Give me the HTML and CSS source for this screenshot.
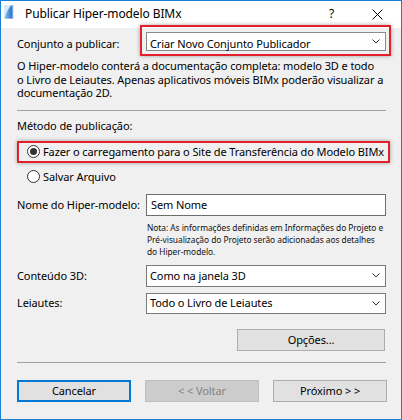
FILE: index.html
```html
<!DOCTYPE html>
<html lang="pt">
<head>
<meta charset="utf-8">
<title>Publicar Hiper-modelo BIMx</title>
<link rel="stylesheet" href="styles.css">
</head>
<body>
<div class="window">
  <div class="titlebar">
    <svg class="appicon" width="10" height="14" viewBox="0 0 10 14">
      <defs>
        <linearGradient id="g" x1="0" y1="0" x2="1" y2="0">
          <stop offset="0" stop-color="#8fc3f0"/>
          <stop offset="1" stop-color="#1e6fd0"/>
        </linearGradient>
      </defs>
      <rect x="0" y="0" width="10" height="14" fill="#d7e8f8"/>
      <path d="M7 0.5 Q3 5 0.5 13.5 L8.5 13.5 L8.5 0.5 Z" fill="url(#g)"/>
    </svg>
    <span class="title">Publicar Hiper-modelo BIMx</span>
    <span class="help">?</span>
    <svg class="close" width="11" height="11" viewBox="0 0 11 11">
      <path d="M0.5 0.5 L10.5 10.5 M10.5 0.5 L0.5 10.5" stroke="#000" stroke-width="1" fill="none"/>
    </svg>
  </div>
  <div class="content">
    <div class="row row-set">
      <span class="lbl">Conjunto a publicar:</span>
      <div class="select select-set">
        <span class="sel-text">Criar Novo Conjunto Publicador</span>
        <svg class="chev" width="8" height="5" viewBox="0 0 8 5"><path d="M0.5 0.5 L4 4 L7.5 0.5" stroke="#333" fill="none"/></svg>
      </div>
    </div>
    <p class="desc">O Hiper-modelo conterá a documentação completa: modelo 3D e todo<br>o Livro de Leiautes. Apenas aplicativos móveis BIMx poderão visualizar a<br>documentação 2D.</p>
    <div class="sep sep1"></div>
    <div class="section">Método de publicação:</div>
    <div class="radio-row radio1"><span class="radio checked"></span><span>Fazer o carregamento para o Site de Transferência do Modelo BIMx</span></div>
    <div class="radio-row radio2"><span class="radio"></span><span>Salvar Arquivo</span></div>
    <div class="row row-name">
      <span class="lbl">Nome do Hiper-modelo:</span>
      <div class="input">Sem Nome</div>
    </div>
    <p class="note">Nota: As informações definidas em Informações do Projeto e<br>Pré-visualização do Projeto serão adicionadas aos detalhes<br>do Hiper-modelo.</p>
    <div class="row row-3d">
      <span class="lbl">Conteúdo 3D:</span>
      <div class="select">
        <span class="sel-text">Como na janela 3D</span>
        <svg class="chev" width="8" height="5" viewBox="0 0 8 5"><path d="M0.5 0.5 L4 4 L7.5 0.5" stroke="#333" fill="none"/></svg>
      </div>
    </div>
    <div class="row row-lay">
      <span class="lbl">Leiautes:</span>
      <div class="select">
        <span class="sel-text">Todo o Livro de Leiautes</span>
        <svg class="chev" width="8" height="5" viewBox="0 0 8 5"><path d="M0.5 0.5 L4 4 L7.5 0.5" stroke="#333" fill="none"/></svg>
      </div>
    </div>
    <div class="options-row"><div class="btn btn-options">Opções...</div></div>
    <div class="sep sep2"></div>
    <div class="buttons">
      <div class="btn btn-default">Cancelar</div>
      <div class="btn btn-disabled">&lt; &lt; Voltar</div>
      <div class="btn">Próximo &gt; &gt;</div>
    </div>
  </div>
  <div class="annot annot1"></div>
  <div class="annot annot2"></div>
</div>
</body>
</html>
```

FILE: styles.css
```css
html, body {
  margin: 0;
  padding: 0;
  background: #f0f0f0;
}

.window {
  position: relative;
  width: 402px;
  height: 420px;
  box-sizing: border-box;
  border: 1px solid #1c7fd6;
  background: #f0f0f0;
  font-family: "Noto Sans", "Open Sans", sans-serif;
  font-size: 11px;
  letter-spacing: -0.1px;
  color: #000;
  overflow: hidden;
}

.titlebar {
  height: 27px;
  background: #fff;
  display: flex;
  align-items: flex-start;
}

.appicon {
  margin: 4px 0 0 3px;
  flex: none;
}

.title {
  margin: 5px 0 0 11px;
  font-size: 12px;
  line-height: 16px;
}

.help {
  margin: 5px 0 0 auto;
  font-size: 12px;
  line-height: 16px;
}

.close {
  margin: 8px 18px 0 38px;
  flex: none;
}

.content {
  padding: 4px 15px 0 16px;
}

.row {
  display: flex;
  align-items: center;
}

.lbl {
  width: 129px;
  flex: none;
  line-height: 14px;
}

.select {
  width: 240px;
  height: 22px;
  box-sizing: border-box;
  border: 1px solid #7a7a7a;
  background: #fff;
  display: flex;
  align-items: center;
  padding: 0 5px 0 3px;
}

.select-set {
  height: 19px;
  border-color: #8a8a8a;
}

.row-set .lbl {
  margin-top: 5px;
}

.select-set .sel-text {
  margin-top: 4px;
}

.sel-text {
  flex: 1;
  line-height: 14px;
  white-space: nowrap;
}

.chev {
  flex: none;
}

.desc {
  margin: 8px 0 0 0;
  line-height: 13.5px;
  white-space: nowrap;
}

.sep {
  height: 1px;
  background: #a0a0a0;
  width: 369px;
}

.sep1 {
  margin-top: 10px;
}

.section {
  margin-top: 8px;
  line-height: 14px;
}

.radio-row {
  display: flex;
  align-items: center;
  height: 16px;
  line-height: 14px;
  white-space: nowrap;
}

.radio1 {
  margin-top: 11px;
  padding-left: 10px;
}

.radio2 {
  margin-top: 9px;
  padding-left: 10px;
}

.radio {
  width: 13px;
  height: 13px;
  box-sizing: border-box;
  border: 1px solid #333;
  border-radius: 50%;
  background: #fff;
  margin-right: 3px;
  flex: none;
  display: flex;
  align-items: center;
  justify-content: center;
}

.radio.checked::after {
  content: "";
  width: 7px;
  height: 7px;
  border-radius: 50%;
  background: #333;
}

.row-name {
  margin-top: 9px;
}

.input {
  width: 240px;
  height: 22px;
  box-sizing: border-box;
  border: 1px solid #6d6d6d;
  background: #fff;
  padding: 0 4px;
  line-height: 20px;
}

.note {
  margin: 6px 0 0 130px;
  font-size: 8.4px;
  letter-spacing: -0.05px;
  line-height: 12px;
  white-space: nowrap;
  color: #111;
}

.row-3d {
  margin-top: 7px;
}

.row-lay {
  margin-top: 6px;
}

.row-lay .select {
  height: 21px;
}

.options-row {
  display: flex;
  justify-content: flex-end;
  margin-top: 15px;
  padding-right: 1px;
}

.btn {
  width: 114px;
  height: 22px;
  box-sizing: border-box;
  border: 1px solid #adadad;
  background: #e1e1e1;
  display: flex;
  align-items: center;
  justify-content: center;
  line-height: 14px;
}

.btn-options {
  width: 148px;
}

.sep2 {
  margin-top: 11px;
}

.buttons {
  display: flex;
  justify-content: space-between;
  margin-top: 17px;
  margin-right: -1px;
}

.btn-default {
  border: 2px solid #0078d7;
}

.btn-disabled {
  background: #cccccc;
  border-color: #bfbfbf;
  color: #838383;
}

.annot {
  position: absolute;
  box-sizing: border-box;
  border: 2px solid #e4212a;
  box-shadow: 0 0 4px rgba(0, 0, 0, 0.35);
}

.annot1 {
  left: 139px;
  top: 24px;
  width: 251px;
  height: 31px;
}

.annot2 {
  left: 16px;
  top: 140px;
  width: 373px;
  height: 22px;
}
```
